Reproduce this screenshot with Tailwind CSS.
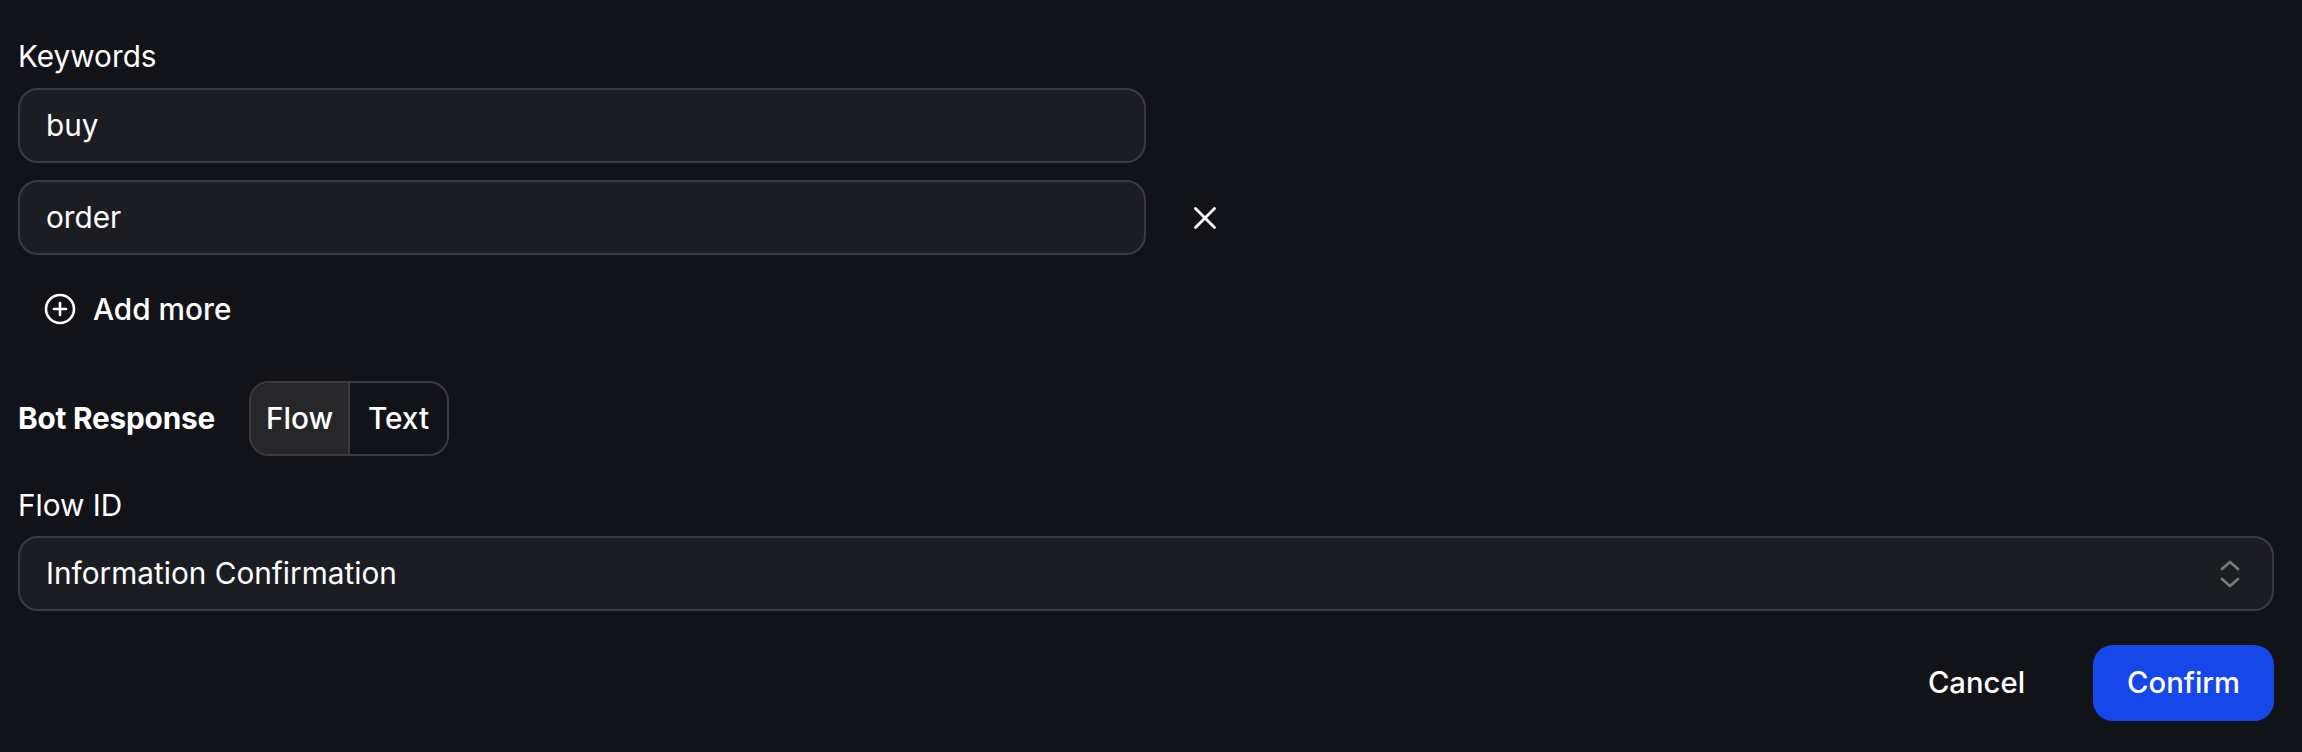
<!DOCTYPE html>
<html><head><meta charset="utf-8"><script src="https://cdn.jsdelivr.net/npm/@tailwindcss/browser@4"></script></head>
<body class="m-0 bg-[#121318]">
<div class="w-[2302px] h-[752px] overflow-hidden pl-[18px] pr-[28px] pt-[36px] flex flex-col font-['Inter',sans-serif] text-white bg-[#121318] text-[29.75px]">
  <div class="h-[40px] leading-[40px]">Keywords</div>
  <div class="mt-[12px] w-[1128px] h-[75px] rounded-[20px] border-2 border-[#3a3b40] bg-[#1c1d22] pl-[26px] flex items-center">buy</div>
  <div class="mt-[17px] flex items-center">
    <div class="w-[1128px] h-[75px] rounded-[20px] border-2 border-[#3a3b40] bg-[#1c1d22] pl-[26px] flex items-center">order</div>
    <svg class="ml-[48px] w-[22px] h-[22px]" viewBox="0 0 22 22" fill="none" stroke="white" stroke-width="2.8" stroke-linecap="round"><path d="M1.5 1.5 20.5 20.5M20.5 1.5 1.5 20.5"/></svg>
  </div>
  <div class="mt-[26px] h-[56px] flex items-center pl-[26px] font-medium">
    <svg class="w-[32px] h-[32px]" viewBox="0 0 32 32" fill="none" stroke="white" stroke-width="2.6" stroke-linecap="round"><circle cx="16" cy="16" r="14"/><path d="M16 10v12M10 16h12"/></svg>
    <span class="ml-[17px]">Add more</span>
  </div>
  <div class="mt-[44px] flex items-center">
    <span class="w-[231px] font-bold tracking-[-0.2px]">Bot Response</span>
    <div class="flex h-[75px] rounded-[20px] border-2 border-[#3a3b40] overflow-hidden font-medium">
      <div class="w-[99px] bg-[#272729] border-r-2 border-[#3a3b40] flex items-center justify-center">Flow</div>
      <div class="w-[97px] flex items-center justify-center">Text</div>
    </div>
  </div>
  <div class="mt-[29px] h-[40px] leading-[40px]">Flow ID</div>
  <div class="mt-[11px] w-[2256px] h-[75px] rounded-[20px] border-2 border-[#3a3b40] bg-[#1c1d22] pl-[26px] pr-[32px] flex items-center justify-between">
    <span>Information Confirmation</span>
    <svg class="w-[20px] h-[28px]" viewBox="0 0 20 28" fill="none" stroke="#77787c" stroke-width="2.8" stroke-linecap="round" stroke-linejoin="round"><path d="M2 9 10 2 18 9M2 19 10 26 18 19"/></svg>
  </div>
  <div class="mt-[34px] flex justify-end items-center font-medium text-[29.25px]">
    <span class="mr-[68px]">Cancel</span>
    <div class="w-[181px] h-[76px] rounded-[20px] bg-[#1647e8] flex items-center justify-center">Confirm</div>
  </div>
</div>
</body></html>
